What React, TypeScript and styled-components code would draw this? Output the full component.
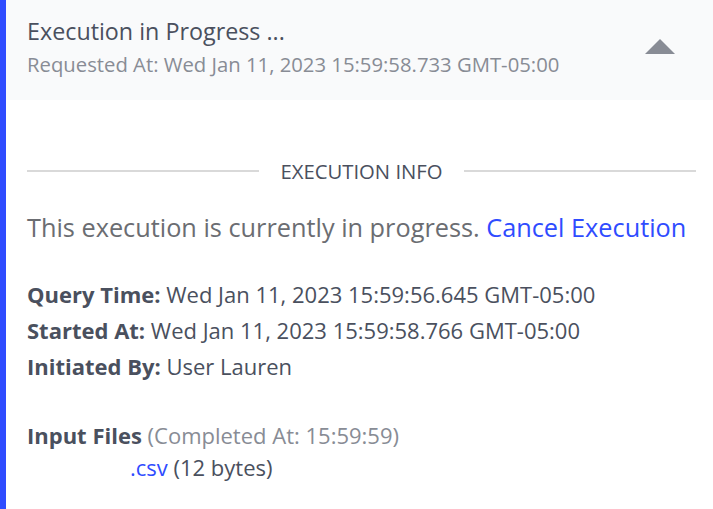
import React from "react";
import styled, { createGlobalStyle } from "styled-components";

const Global = createGlobalStyle`
  html, body { margin: 0; background: #ffffff; }
  body { font-family: "Open Sans", "Noto Sans", sans-serif; }
`;

const Frame = styled.div`
  display: flex;
  min-height: 509px;
`;

const Accent = styled.div`
  width: 6px;
  flex: none;
  background: #2f4cff;
`;

const Panel = styled.div`
  flex: 1;
  display: flex;
  flex-direction: column;
`;

const Header = styled.div`
  display: flex;
  justify-content: space-between;
  align-items: flex-start;
  height: 100px;
  box-sizing: border-box;
  padding: 16px 38px 0 21px;
  background: #f9fafb;
`;

const Heading = styled.div`
  display: flex;
  flex-direction: column;
`;

const Title = styled.div`
  font-size: 23.3px;
  line-height: 30px;
  color: #4a505e;
`;

const Subtitle = styled.div`
  font-size: 20.3px;
  line-height: 36px;
  color: #888c95;
`;

const Caret = styled.div`
  margin-top: 23px;
  width: 0;
  height: 0;
  border-left: 15px solid transparent;
  border-right: 15px solid transparent;
  border-bottom: 15px solid #888c95;
`;

const Body = styled.div`
  display: flex;
  flex-direction: column;
  padding: 56px 17px 0 21px;
`;

const SectionTitle = styled.div`
  display: flex;
  align-items: center;
  gap: 21px;
  height: 30px;
  font-size: 20.3px;
  color: #4a505e;
  white-space: nowrap;

  &::before,
  &::after {
    content: "";
    flex: 1;
    height: 2px;
    background: #d9d9d9;
  }
`;

const Notice = styled.p`
  margin: 23px 0 0;
  font-size: 25.3px;
  line-height: 36px;
  color: #6b6d72;
`;

const Link = styled.a`
  color: #2f4cff;
  text-decoration: none;
  cursor: pointer;
`;

const Details = styled.div`
  margin-top: 31px;
  display: flex;
  flex-direction: column;
`;

const Row = styled.div<{ $lh?: number }>`
  font-size: 22px;
  line-height: ${(p) => p.$lh ?? 36}px;
  color: #4a505e;
  white-space: nowrap;
`;

const Label = styled.span`
  font-weight: 700;
`;

const Muted = styled.span`
  color: #888c95;
`;

const Files = styled.div`
  margin-top: 35px;
  display: flex;
  flex-direction: column;
`;

const FileItem = styled(Row)`
  padding-left: 103px;
`;

const details = [
  { label: "Query Time:", value: "Wed Jan 11, 2023 15:59:56.645 GMT-05:00" },
  { label: "Started At:", value: "Wed Jan 11, 2023 15:59:58.766 GMT-05:00" },
  { label: "Initiated By:", value: "User Lauren" },
];

export default function App() {
  return (
    <>
      <Global />
      <Frame>
        <Accent />
        <Panel>
          <Header>
            <Heading>
              <Title>Execution in Progress ...</Title>
              <Subtitle>Requested At: Wed Jan 11, 2023 15:59:58.733 GMT-05:00</Subtitle>
            </Heading>
            <Caret />
          </Header>
          <Body>
            <SectionTitle>EXECUTION INFO</SectionTitle>
            <Notice>
              This execution is currently in progress. <Link>Cancel Execution</Link>
            </Notice>
            <Details>
              {details.map((d) => (
                <Row key={d.label}>
                  <Label>{d.label}</Label> {d.value}
                </Row>
              ))}
            </Details>
            <Files>
              <Row $lh={32}>
                <Label>Input Files</Label> <Muted>(Completed At: 15:59:59)</Muted>
              </Row>
              <FileItem $lh={32}>
                <Link>.csv</Link> (12 bytes)
              </FileItem>
            </Files>
          </Body>
        </Panel>
      </Frame>
    </>
  );
}
